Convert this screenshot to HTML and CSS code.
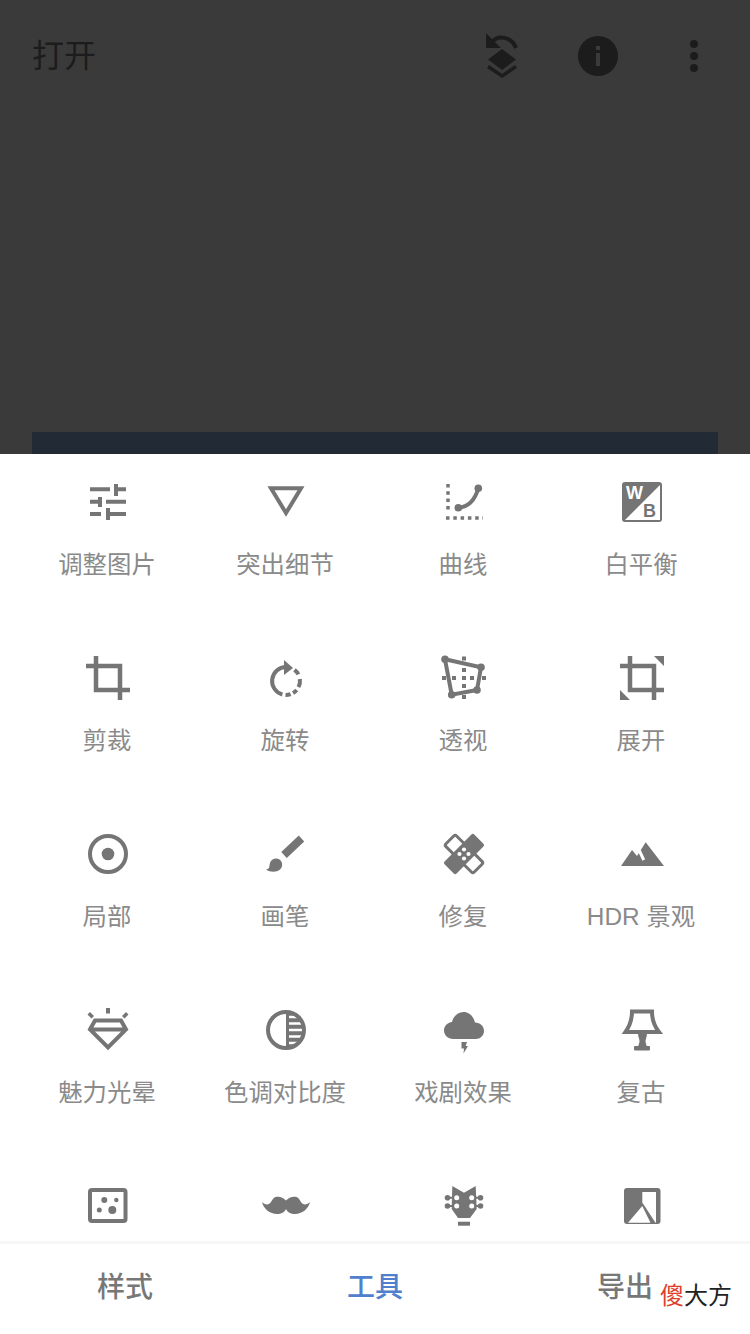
FILE: index.html
```html
<!DOCTYPE html>
<html lang="zh-CN">
<head>
    <meta charset="UTF-8">
    <meta name="viewport" content="width=device-width, initial-scale=1.0">
    <title>工具</title>
    <link rel="stylesheet" href="styles.css">
</head>
<body>
    <div class="screen">
        <!-- Dimmed editor behind the sheet -->
        <header class="topbar">
            <div class="open">打开</div>
            <div class="top-icons">
                <svg class="top-icon undo" viewBox="0 0 48 56">
                    <path class="fill-dark" d="M9 5V20H24Z"/>
                    <path class="line-dark" d="M15 14C21 7 34 8 39 20" stroke-width="4"/>
                    <path class="fill-dark" d="M25 21L39 31.500L25 42L11 31.500Z"/>
                    <path class="line-dark" d="M11 38.500L25 48L39 38.500" stroke-width="3.500"/>
                </svg>
                <svg class="top-icon info" viewBox="0 0 40 40">
                    <circle class="fill-dark" cx="20" cy="20" r="20"/>
                    <rect x="18" y="10" width="4" height="4" fill="#3a3a3a"/>
                    <rect x="18" y="17" width="4" height="13" fill="#3a3a3a"/>
                </svg>
                <svg class="top-icon more" viewBox="0 0 10 36">
                    <circle class="fill-dark" cx="5" cy="6" r="4"/>
                    <circle class="fill-dark" cx="5" cy="18" r="4"/>
                    <circle class="fill-dark" cx="5" cy="30" r="4"/>
                </svg>
            </div>
        </header>
        <div class="photo"><div class="photo-strip"></div></div>

        <!-- Tools sheet -->
        <main class="sheet">
            <div class="tool-grid">
                <div class="tool">
                    <svg class="icon" viewBox="1 0 48 48">
                        <path class="line" d="M7 11.300H27M33 6V18M33 11.300H43M7 23.700H17M17 19V29M23 23.700H43M7 36H18M25 30V42M25 36H43"/>
                    </svg>
                    <div class="label">调整图片</div>
                </div>
                <div class="tool">
                    <svg class="icon" viewBox="1 0 48 48">
                        <path class="line" d="M10 10.300H40L25 35Z"/>
                    </svg>
                    <div class="label">突出细节</div>
                </div>
                <div class="tool">
                    <svg class="icon" viewBox="1 0 48 48">
                        <path class="dots" d="M9 6V34"/>
                        <path class="dots" d="M7 40H44"/>
                        <path class="line" d="M19.300 29.700C30 29 36 22 39.300 10.300"/>
                        <circle class="fill" cx="19.300" cy="29.700" r="3.800"/>
                        <circle class="fill" cx="39.300" cy="10.300" r="3.800"/>
                    </svg>
                    <div class="label">曲线</div>
                </div>
                <div class="tool">
                    <svg class="icon" viewBox="0 0 48 48">
                        <rect class="fill" x="4" y="4" width="40" height="40" rx="3"/>
                        <path d="M42 7V42H7Z" fill="#fff"/>
                        <text class="wb wb-w" x="8" y="21">W</text>
                        <text class="wb wb-b" x="25" y="39">B</text>
                    </svg>
                    <div class="label">白平衡</div>
                </div>

                <div class="tool">
                    <svg class="icon" viewBox="0 0 48 48">
                        <path class="line thick" d="M2 12H36V46M12 2V36H46"/>
                    </svg>
                    <div class="label">剪裁</div>
                </div>
                <div class="tool">
                    <svg class="icon" viewBox="1 0 48 48">
                        <path class="line" d="M25 13A14 14 0 0 0 21.400 40.500M33.500 15.900A14 14 0 0 1 37.400 20.400M38.900 25.100A14 14 0 0 1 37.500 33.200M35.700 36A14 14 0 0 1 32 39.100M29.600 40.200A14 14 0 0 1 24.500 41"/>
                        <path class="fill" d="M23 6L32 14L23 21Z"/>
                    </svg>
                    <div class="label">旋转</div>
                </div>
                <div class="tool">
                    <svg class="icon" viewBox="1 0 48 48">
                        <path class="line" d="M6 5.300L42 13.300L38 36L12.700 40.700Z"/>
                        <circle class="fill" cx="6" cy="5.300" r="3.800"/>
                        <circle class="fill" cx="42" cy="13.300" r="3.800"/>
                        <circle class="fill" cx="38" cy="36" r="3.800"/>
                        <circle class="fill" cx="12.700" cy="40.700" r="3.800"/>
                        <path class="fill" d="M23 2.500h4v4h-4zM23 14h4v4h-4zM23 22h4v4h-4zM23 30h4v4h-4zM23 41h4v4h-4zM3 22h4v4H3zM13 22h4v4h-4zM31 22h4v4h-4zM43 22h4v4h-4z"/>
                    </svg>
                    <div class="label">透视</div>
                </div>
                <div class="tool">
                    <svg class="icon" viewBox="0 0 48 48">
                        <path class="line thick" d="M2 12H36V46M12 2V36H46"/>
                        <path class="fill" d="M36 2H46V12ZM2 36L12 46H2Z"/>
                    </svg>
                    <div class="label">展开</div>
                </div>

                <div class="tool">
                    <svg class="icon" viewBox="0 0 48 48">
                        <circle class="line" cx="24" cy="24" r="18"/>
                        <circle class="fill" cx="24" cy="24" r="6.300"/>
                    </svg>
                    <div class="label">局部</div>
                </div>
                <div class="tool">
                    <svg class="icon" viewBox="1 0 48 48">
                        <path class="line handle" d="M40.500 8.500L23 25"/>
                        <path class="fill" d="M5 39.500C9 39 8 36.500 9 33C10 29 15 27.500 18.500 29.500C22 32 22 37 19 39.500C15.500 42.500 9 42.500 5 39.500Z"/>
                    </svg>
                    <div class="label">画笔</div>
                </div>
                <div class="tool">
                    <svg class="icon" viewBox="0 0 48 48">
                        <rect class="band-line" x="16.500" y="4" width="15" height="40" rx="2" transform="rotate(-45 24 24)"/>
                        <rect class="fill" x="15.500" y="3" width="17" height="42" rx="2" transform="rotate(45 24 24)"/>
                        <circle class="hole" cx="24" cy="19.500" r="2.100"/>
                        <circle class="hole" cx="19.500" cy="24" r="2.100"/>
                        <circle class="hole" cx="28.500" cy="24" r="2.100"/>
                        <circle class="hole" cx="24" cy="28.500" r="2.100"/>
                    </svg>
                    <div class="label">修复</div>
                </div>
                <div class="tool">
                    <svg class="icon" viewBox="0 0 48 48">
                        <path class="fill" d="M3 36L14 20L19 26L27.700 12.300L46 36Z"/>
                        <path class="cut" d="M21 20L25.800 30"/>
                    </svg>
                    <div class="label">HDR 景观</div>
                </div>

                <div class="tool">
                    <svg class="icon" viewBox="0 0 48 48">
                        <path class="fill" d="M22 2h4v5.500h-4zM3.500 8.500L6 6L10 10L7.500 12.500ZM44.500 8.500L42 6L38 10L40.500 12.500Z"/>
                        <path class="line" d="M11 14.500H37L42 23.500L24 41.500L6 23.500ZM6 23.500H42"/>
                    </svg>
                    <div class="label">魅力光晕</div>
                </div>
                <div class="tool">
                    <svg class="icon" viewBox="0 0 48 48">
                        <path class="fill" d="M24 6A18 18 0 0 1 24 42Z"/>
                        <path class="cut thin" d="M27 11H46M27 17.500H46M27 24H46M27 30.500H46M27 37H46"/>
                        <circle class="line" cx="24" cy="24" r="18"/>
                    </svg>
                    <div class="label">色调对比度</div>
                </div>
                <div class="tool">
                    <svg class="icon" viewBox="0 0 48 48">
                        <path class="fill" d="M13 33C8 33 4 29 4 24.500C4 20 7.500 16.500 12 16C13.500 9.500 18.500 6 23.500 6C29.500 6 33.500 10.500 35 16.500C40 16.500 44 20 44 25C44 29.500 40 33 36 33Z"/>
                        <path class="fill" d="M21.500 36H27L25.700 40H28L23.500 47.500L24 42.500H21.500Z"/>
                    </svg>
                    <div class="label">戏剧效果</div>
                </div>
                <div class="tool">
                    <svg class="icon" viewBox="0 0 48 48">
                        <path class="line" d="M14 5.500H34C34 14 37 21 41 26H7.500C11 21 14 14 14 5.500Z"/>
                        <path class="fill" d="M20 27H29C29 31 27.500 33 27.500 35C27.500 37 28.500 39 29 41H20C20.500 39 21.500 37 21.500 35C21.500 33 20 31 20 27Z"/>
                        <rect class="fill" x="16" y="40" width="16" height="4.500" rx="1"/>
                    </svg>
                    <div class="label">复古</div>
                </div>

                <div class="tool">
                    <svg class="icon" viewBox="0 0 48 48">
                        <rect class="line" x="6" y="8" width="35.500" height="31" rx="2"/>
                        <circle class="fill" cx="20.300" cy="18" r="3"/>
                        <circle class="fill" cx="32.300" cy="18" r="2.200"/>
                        <circle class="fill" cx="15.300" cy="28" r="2.500"/>
                        <circle class="fill" cx="28.300" cy="28" r="4"/>
                    </svg>
                </div>
                <div class="tool">
                    <svg class="icon" viewBox="0 0 48 48">
                        <path class="fill" d="M24 18.500C21 15 17 14 13.500 15C10.500 16 9.500 20.500 7 22C4.500 23 2 22 0 20C1.500 27 8 32 15 32C19 32 23 30 24 27C25 30 29 32 33 32C40 32 46.500 27 48 20C46 22 43.500 23 41 22C38.500 20.500 37.500 16 34.500 15C31 14 27 15 24 18.500Z"/>
                    </svg>
                </div>
                <div class="tool">
                    <svg class="icon" viewBox="0 0 48 48">
                        <path class="fill" d="M12.300 4L24 10.700L35.700 4L36.700 27L30 36H18L11.700 27Z"/>
                        <path class="fill" d="M18 39.700H30V43.700H18Z"/>
                        <path class="peg" d="M7 15.700H12M7 24H12M36 15.700H41M36 24H41"/>
                        <circle class="fill" cx="7.500" cy="15.700" r="2.800"/>
                        <circle class="fill" cx="40.500" cy="15.700" r="2.800"/>
                        <circle class="fill" cx="7.500" cy="24" r="2.800"/>
                        <circle class="fill" cx="40.500" cy="24" r="2.800"/>
                        <circle class="hole" cx="16.700" cy="15.700" r="2.500"/>
                        <circle class="hole" cx="31.700" cy="15.700" r="2.500"/>
                        <circle class="hole" cx="16.700" cy="24" r="2.500"/>
                        <circle class="hole" cx="31.700" cy="24" r="2.500"/>
                    </svg>
                </div>
                <div class="tool">
                    <svg class="icon" viewBox="0 0 48 48">
                        <rect class="fill" x="6" y="6" width="36.500" height="36" rx="3"/>
                        <path class="hole" d="M24.300 10H38V40.700H37.500L24.300 20.500Z"/>
                        <path class="hole" d="M10 40.700L24.300 24L32.500 40.700Z"/>
                    </svg>
                </div>
            </div>
        </main>

        <nav class="tabs">
            <div class="tab">样式</div>
            <div class="tab active">工具</div>
            <div class="tab">导出</div>
        </nav>

        <div class="watermark"><span class="mark-red">傻</span>大方</div>
    </div>
</body>
</html>
```

FILE: styles.css
```css
html, body {
    margin: 0;
    padding: 0;
}
body {
    font-family: "Liberation Sans", "Noto Sans CJK SC", sans-serif;
    background-color: #fff;
}
.screen {
    position: relative;
    width: 750px;
    height: 1334px;
    display: flex;
    flex-direction: column;
    overflow: hidden;
}

/* top bar */
.topbar {
    height: 112px;
    flex-shrink: 0;
    display: flex;
    align-items: center;
    justify-content: space-between;
    padding: 0 51px 0 32px;
    background-color: #3a3a3a;
}
.open {
    font-size: 32px;
    line-height: 40px;
    color: #1c1c1c;
}
.top-icons {
    display: flex;
    align-items: center;
}
.top-icon {
    display: block;
}
.undo {
    width: 48px;
    height: 56px;
    margin-right: 53px;
}
.info {
    width: 40px;
    height: 40px;
    margin-right: 71px;
}
.more {
    width: 10px;
    height: 36px;
}
.fill-dark {
    fill: #1c1c1c;
}
.line-dark {
    fill: none;
    stroke: #1c1c1c;
}

.photo {
    flex: 1;
    display: flex;
    align-items: flex-end;
    padding: 0 32px;
    background-color: #3a3a3a;
}
.photo-strip {
    flex: 1;
    height: 22px;
    background-color: #222a36;
}

/* tools */
.sheet {
    height: 787px;
    flex-shrink: 0;
    overflow: hidden;
    box-sizing: border-box;
    padding: 24px 19px 0;
    background-color: #fff;
}
.tool-grid {
    display: grid;
    grid-template-columns: repeat(4, 178px);
    grid-auto-rows: 104px;
    row-gap: 72px;
}
.tool {
    display: flex;
    flex-direction: column;
    align-items: center;
}
.icon {
    display: block;
    width: 48px;
    height: 48px;
    overflow: visible;
}
.label {
    margin-top: 22px;
    padding-right: 2px;
    font-size: 24.4px;
    line-height: 34px;
    color: #8a8a8a;
    white-space: nowrap;
}
.fill {
    fill: #757575;
}
.line {
    fill: none;
    stroke: #757575;
    stroke-width: 4;
}
.thick {
    stroke-width: 4.5;
}
.handle {
    stroke-width: 8;
}
.dots {
    fill: none;
    stroke: #757575;
    stroke-width: 3.5;
    stroke-dasharray: 3.5 3.8;
}
.band-line {
    fill: #fff;
    stroke: #757575;
    stroke-width: 3;
}
.hole {
    fill: #fff;
}
.cut {
    fill: none;
    stroke: #fff;
    stroke-width: 3;
}
.thin {
    stroke-width: 2.5;
}
.peg {
    fill: none;
    stroke: #757575;
    stroke-width: 2;
}
.wb {
    font-family: "Liberation Sans", sans-serif;
    font-size: 18px;
    font-weight: 700;
}
.wb-w {
    fill: #fff;
}
.wb-b {
    fill: #757575;
}

/* bottom tabs */
.tabs {
    height: 93px;
    flex-shrink: 0;
    box-sizing: border-box;
    display: grid;
    grid-template-columns: repeat(3, 1fr);
    border-top: 3px solid #f7f7f7;
    background-color: #fff;
}
.tab {
    padding-top: 24px;
    font-size: 28px;
    line-height: 40px;
    font-weight: 500;
    color: #777;
    text-align: center;
}
.tab.active {
    color: #5080cc;
}

.watermark {
    position: absolute;
    left: 660px;
    top: 1280px;
    font-size: 24px;
    line-height: 32px;
    color: #222;
}
.mark-red {
    color: #e0402a;
}
```
